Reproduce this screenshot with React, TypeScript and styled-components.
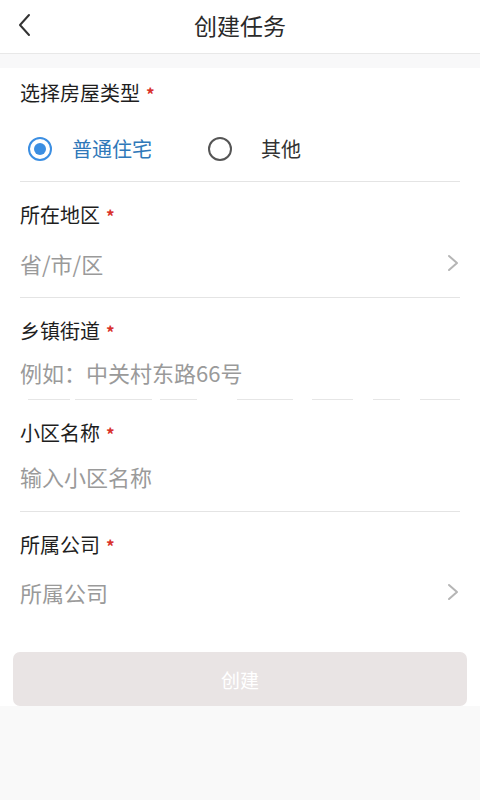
import styled, { createGlobalStyle } from "styled-components";

const GlobalStyle = createGlobalStyle`
  html, body {
    margin: 0;
    padding: 0;
    background: #f9f9f9;
    font-family: "Noto Sans CJK SC", "Noto Sans", sans-serif;
  }
`;

const Page = styled.div`
  width: 480px;
  min-height: 800px;
  background: #f9f9f9;
`;

const Header = styled.header`
  height: 53px;
  display: flex;
  align-items: center;
  justify-content: center;
  position: relative;
  background: #fff;
  border-bottom: 1px solid #e8e8e8;
`;

const BackButton = styled.button`
  position: absolute;
  left: 14px;
  top: 13px;
  width: 20px;
  height: 24px;
  padding: 0;
  border: none;
  background: none;
  display: flex;
  align-items: center;
  justify-content: center;
`;

const Title = styled.h1`
  margin: 0 0 2px;
  font-size: 23px;
  font-weight: 400;
  color: #2a2a2a;
  line-height: 1;
`;

const Strip = styled.div`
  height: 14px;
  background: #f8f8f9;
`;

const Form = styled.div`
  background: #fff;
`;

const Field = styled.div<{ $first?: boolean }>`
  padding-top: ${(p) => (p.$first ? "14px" : "22px")};
`;

const Label = styled.div`
  padding: 0 20px;
  height: 22px;
  display: flex;
  align-items: center;
  font-size: 20px;
  line-height: 22px;
  color: #1e1e1e;
`;

const Star = styled.span`
  color: #d9312b;
  margin-left: 6px;
  font-size: 17px;
  line-height: 1;
  font-weight: 700;
`;

const ValueRow = styled.div<{ $gap: number }>`
  margin-top: ${(p) => p.$gap}px;
  height: 40px;
  padding: 0 20px;
  display: flex;
  align-items: center;
  justify-content: space-between;
`;

const Placeholder = styled.span`
  font-size: 22px;
  line-height: 1;
  color: #9a9a9a;
`;

const Divider = styled.div<{ $bottom: number; $broken?: boolean }>`
  margin: ${(p) => p.$bottom}px 20px 0;
  height: 1px;
  background: ${(p) =>
    p.$broken
      ? `linear-gradient(90deg,
          transparent 0 8px, #e6e6e6 8px 50px, transparent 50px 55px,
          #e6e6e6 55px 132px, transparent 132px 140px, #e6e6e6 140px 177px,
          transparent 177px 217px, #e6e6e6 217px 273px, transparent 273px 292px,
          #e6e6e6 292px 333px, transparent 333px 353px, #e6e6e6 353px 380px,
          transparent 380px 400px, #e6e6e6 400px 440px)`
      : "#e4e4e4"};
`;

const RadioGroup = styled.div`
  margin-top: 25px;
  height: 40px;
  padding: 0 28px;
  display: flex;
  align-items: center;
`;

const RadioItem = styled.label<{ $checked?: boolean }>`
  display: flex;
  align-items: center;
  gap: 20px;
  margin-right: 56px;
  font-size: 20px;
  line-height: 1;
  color: ${(p) => (p.$checked ? "#2f78b9" : "#333")};

  & + & {
    gap: 29px;
  }
`;

const RadioCircle = styled.span<{ $checked?: boolean }>`
  width: 24px;
  height: 24px;
  box-sizing: border-box;
  border-radius: 50%;
  border: 2.5px solid ${(p) => (p.$checked ? "#3b8ee2" : "#555")};
  display: flex;
  align-items: center;
  justify-content: center;

  &::after {
    content: "";
    width: 12px;
    height: 12px;
    border-radius: 50%;
    background: ${(p) => (p.$checked ? "#3b8ee2" : "transparent")};
  }
`;

const ButtonWrap = styled.div`
  padding: 40px 13px 0;
`;

const SubmitButton = styled.button`
  width: 100%;
  height: 54px;
  border: none;
  border-radius: 7px;
  background: #e9e4e4;
  color: #fff;
  font-family: inherit;
  font-size: 19px;
  display: block;
`;

const Chevron = () => (
  <svg width="14" height="18" viewBox="0 0 14 18" fill="none">
    <path d="M3 2 L11 9 L3 16" stroke="#b5b5b5" strokeWidth="2" strokeLinecap="round" strokeLinejoin="round" />
  </svg>
);

const App = () => {
  return (
    <Page>
      <GlobalStyle />
      <Header>
        <BackButton aria-label="返回">
          <svg width="14" height="24" viewBox="0 0 14 24" fill="none">
            <path d="M12 2 L3 12 L12 22" stroke="#333" strokeWidth="2" strokeLinecap="round" strokeLinejoin="round" />
          </svg>
        </BackButton>
        <Title>创建任务</Title>
      </Header>
      <Strip />
      <Form>
        <Field $first>
          <Label>
            选择房屋类型<Star>*</Star>
          </Label>
          <RadioGroup>
            <RadioItem $checked>
              <RadioCircle $checked />
              普通住宅
            </RadioItem>
            <RadioItem>
              <RadioCircle />
              其他
            </RadioItem>
          </RadioGroup>
          <Divider $bottom={12} />
        </Field>
        <Field>
          <Label>
            所在地区<Star>*</Star>
          </Label>
          <ValueRow $gap={17}>
            <Placeholder>省/市/区</Placeholder>
            <Chevron />
          </ValueRow>
          <Divider $bottom={14} />
        </Field>
        <Field>
          <Label>
            乡镇街道<Star>*</Star>
          </Label>
          <ValueRow $gap={10}>
            <Placeholder>例如：中关村东路66号</Placeholder>
          </ValueRow>
          <Divider $bottom={7} $broken />
        </Field>
        <Field>
          <Label>
            小区名称<Star>*</Star>
          </Label>
          <ValueRow $gap={12}>
            <Placeholder>输入小区名称</Placeholder>
          </ValueRow>
          <Divider $bottom={15} />
        </Field>
        <Field>
          <Label>
            所属公司<Star>*</Star>
          </Label>
          <ValueRow $gap={16}>
            <Placeholder>所属公司</Placeholder>
            <Chevron />
          </ValueRow>
        </Field>
        <ButtonWrap>
          <SubmitButton>创建</SubmitButton>
        </ButtonWrap>
      </Form>
    </Page>
  );
};

export default App;
